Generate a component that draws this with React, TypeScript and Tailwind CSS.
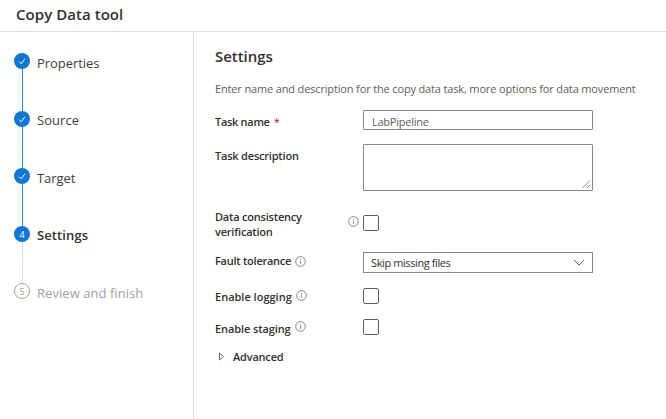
import React from "react";

function Info({ className = "" }: { className?: string }) {
  return (
    <svg className={`h-[11px] w-[11px] shrink-0 ${className}`} viewBox="0 0 11 11" fill="none">
      <circle cx="5.5" cy="5.5" r="4.8" stroke="#777" strokeWidth="0.9" />
      <path d="M5.5 4.8v3M5.5 3v.9" stroke="#777" strokeWidth="0.9" />
    </svg>
  );
}

function Box() {
  return <div className="h-4 w-4 shrink-0 rounded-[2px] border border-[#605e5c] bg-white" />;
}

function Marker({ n, state }: { n: number; state: "done" | "current" | "todo" }) {
  if (state === "todo")
    return (
      <div className="flex h-4 w-4 items-center justify-center rounded-full border border-[#a5a3a1] text-[9px] leading-none text-[#a19f9d]">
        {n}
      </div>
    );
  return (
    <div className="flex h-4 w-4 items-center justify-center rounded-full bg-[#0f78d4] text-[9px] leading-none text-white">
      {state === "current" ? (
        n
      ) : (
        <svg className="h-4 w-4" viewBox="0 0 16 16" fill="none">
          <path d="M5.4 8.7 7.3 10.8 10.9 5.7" stroke="#fff" strokeWidth="0.95" />
        </svg>
      )}
    </div>
  );
}

const steps = [
  { label: "Properties", state: "done", text: "pt-[2px] text-[#403e3c] tracking-[-0.05px]", line: "bg-[#2b88d8]", h: "h-[58px]" },
  { label: "Source", state: "done", text: "pt-px text-[#403e3c] tracking-[0.05px]", line: "bg-[#2b88d8]", h: "h-[57px]" },
  { label: "Target", state: "done", text: "pt-[2px] text-[#403e3c] tracking-[-0.05px]", line: "bg-[#2b88d8]", h: "h-[58px]" },
  { label: "Settings", state: "current", text: "pt-px font-semibold text-[#323130] tracking-[0.1px]", line: "bg-[#dcdcdc]", h: "h-[57px]" },
  { label: "Review and finish", state: "todo", text: "pt-[2px] text-[#a19f9d] tracking-[0.05px]", line: "", h: "h-[16px]" },
] as const;

export default function App() {
  return (
    <div className="flex h-[419px] w-[666px] flex-col overflow-hidden bg-white font-['Open_Sans','Noto_Sans',sans-serif] text-[#323130]">
      <header className="h-8 shrink-0 border-b border-[#dedede] pl-4">
        <h1 className="pt-1 text-[15px] leading-5 font-semibold whitespace-nowrap"><span className="tracking-[0.05px]">Copy Data tool</span></h1>
      </header>
      <div className="flex flex-1">
        <nav className="w-[194px] shrink-0 border-r border-[#dedede] pt-[21px] pl-[14px]">
          {steps.map((s, i) => (
            <div key={s.label} className={`flex gap-[7px] ${s.h}`}>
              <div className="flex w-4 flex-col items-center">
                <Marker n={i + 1} state={s.state} />
                {s.line && <div className={`w-px flex-1 ${s.line}`} />}
              </div>
              <span className={`text-[13px] leading-4 whitespace-nowrap ${s.text}`}>{s.label}</span>
            </div>
          ))}
        </nav>
        <main className="flex-1 pl-[21px] text-[11px] leading-[15px] whitespace-nowrap">
          <h2 className="mt-[13px] h-[22px] text-[15px] leading-[22px] font-semibold"><span className="tracking-[-0.05px]">Settings</span></h2>
          <p className="mt-[14px] h-[15px] text-[#605e5c]"><span className="tracking-[-0.15px]">Enter name and description for the copy data task, more options for data movement</span></p>
          <div className="mt-[14px] flex h-5">
            <div className="flex w-[148px] gap-1 pt-1 font-semibold"><span className="tracking-[-0.3px]">Task name</span><span className="font-normal text-[#a4262c]">*</span></div>
            <div className="flex h-5 w-[230px] items-center rounded-[1px] border border-[#8a8886] pt-[2px] pl-[8px] text-[#605e5c]"><span className="tracking-[-0.25px]">LabPipeline</span></div>
          </div>
          <div className="mt-[14px] flex h-[47px]">
            <div className="w-[148px] pt-1 font-semibold"><span className="tracking-[-0.2px]">Task description</span></div>
            <div className="flex w-[230px] items-end justify-end rounded-[1px] border border-[#8a8886] p-px">
              <svg className="h-[9px] w-[9px]" viewBox="0 0 9 9" stroke="#777" strokeWidth="0.9"><path d="M.5 8 8 .5M4.7 8.3 8.3 4.7" /></svg>
            </div>
          </div>
          <div className="mt-[18px] flex h-[31px]">
            <div className="w-[133px] font-semibold"><span className="tracking-[-0.2px]">Data consistency</span><br /><span className="tracking-[-0.2px]">verification</span></div>
            <Info className="mt-[7px] mr-[4px]" />
            <div className="pt-[6px]"><Box /></div>
          </div>
          <div className="mt-3 flex h-[21px]">
            <div className="flex w-[148px] gap-1 pt-[1px] font-semibold"><span className="tracking-[-0.25px]">Fault tolerance</span><Info className="mt-[3px]" /></div>
            <div className="flex w-[230px] items-center justify-between border border-[#8a8886] pr-[7px] pl-[7px]">
              <span className="tracking-[-0.4px]">Skip missing files</span>
              <svg className="h-3 w-3" viewBox="0 0 12 12" fill="none"><path d="m1 3 5 5 5-5" stroke="#605e5c" /></svg>
            </div>
          </div>
          <div className="mt-[15px] flex h-4">
            <div className="flex w-[148px] gap-1 font-semibold"><span className="pt-[1px] tracking-[0px]">Enable logging</span><Info className="mt-[2px]" /></div>
            <Box />
          </div>
          <div className="mt-[15px] flex h-4">
            <div className="flex w-[148px] gap-1 font-semibold"><span className="pt-[2px] tracking-[-0.1px]">Enable staging</span><Info className="mt-[2px]" /></div>
            <Box />
          </div>
          <div className="mt-[13px] flex h-4 items-center pl-[3px] font-semibold">
            <svg className="mr-2 h-[9px] w-[7px]" viewBox="0 0 7 9" fill="none"><path d="M1.5 1v7L5.5 4.5z" stroke="#605e5c" strokeWidth="0.9" /></svg>
            <span className="tracking-[-0.2px]">Advanced</span>
          </div>
        </main>
      </div>
    </div>
  );
}
